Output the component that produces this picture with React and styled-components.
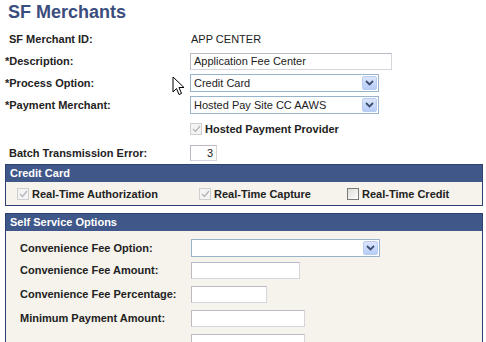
import React from "react";
import styled, { createGlobalStyle } from "styled-components";

const GlobalStyle = createGlobalStyle`
  body {
    margin: 0;
    background: #ffffff;
    font-family: "Liberation Sans", Arial, sans-serif;
  }
`;

const Page = styled.div`
  position: relative;
  width: 486px;
  height: 342px;
  overflow: hidden;
  background: #ffffff;
`;

const Title = styled.h1`
  margin: 0;
  height: 28px;
  padding-left: 8px;
  font-size: 18px;
  line-height: 24px;
  font-weight: bold;
  color: #3b4d7e;
`;

const Form = styled.div`
  display: grid;
  grid-template-columns: 190px 1fr;
  grid-template-rows: 22px 22px 22px 22px 26px 22px;
  align-items: center;
`;

const Label = styled.div`
  padding-left: ${(p) => (p.$required ? "5px" : "9px")};
  font-size: 11px;
  font-weight: bold;
  color: #222;
`;

const Value = styled.div`
  font-size: 11px;
  color: #222;
  padding-left: 1px;
`;

const Field = styled.div`
  display: flex;
  align-items: center;
  align-self: ${(p) => (p.$end ? "end" : "center")};
`;

const TextInput = styled.div`
  box-sizing: border-box;
  width: ${(p) => p.$w}px;
  height: ${(p) => p.$h || 17}px;
  border: 1px solid #bcb8c4;
  border-right-color: #d8d4dc;
  border-bottom-color: #d8d4dc;
  background: #fff;
  font-size: 11px;
  line-height: 15px;
  padding: 0 3px;
  color: #222;
  text-align: ${(p) => (p.$right ? "right" : "left")};
`;

const SelectBox = styled.div`
  box-sizing: border-box;
  width: ${(p) => p.$w}px;
  height: 18px;
  border: 1px solid #98b3cc;
  background: #fff;
  display: flex;
  align-items: center;
  justify-content: space-between;
  padding: 0 1px 0 3px;
  font-size: 11px;
  color: #222;
`;

const Arrow = styled.span`
  box-sizing: border-box;
  width: 15px;
  height: 14px;
  border: 1px solid #b9ccf0;
  border-radius: 2px;
  background: linear-gradient(#dbe6fd, #b8cdf8);
  display: flex;
  align-items: center;
  justify-content: center;
`;

const CheckLine = styled.label`
  display: flex;
  align-items: center;
  gap: 3px;
  font-size: 11px;
  font-weight: bold;
  color: #222;
`;

const Box = styled.span`
  box-sizing: border-box;
  width: 12px;
  height: 12px;
  border: 1px solid ${(p) => (p.$disabled ? "#cfcfcf" : "#7b7b7b")};
  background: ${(p) =>
    p.$disabled ? "#f4f4f4" : "linear-gradient(135deg, #dcdcd6, #ffffff)"};
  display: flex;
  align-items: center;
  justify-content: center;
`;

const Section = styled.div`
  margin: 0 3px 0 5px;
  border: 1px solid #2e4170;
  border-top: none;
  margin-top: ${(p) => p.$top || 0}px;
`;

const SectionHead = styled.div`
  height: 17px;
  background: #3f5789;
  border-top: 1px solid #2e4170;
  color: #fff;
  font-size: 11px;
  font-weight: bold;
  line-height: 17px;
  padding-left: 4px;
`;

const CardRow = styled.div`
  height: 23px;
  background: #f5f3ec;
  display: grid;
  grid-template-columns: 182px 148px 1fr;
  align-items: center;
  padding-left: 11px;
`;

const SelfBody = styled.div`
  background: #f5f3ec;
  display: grid;
  grid-template-columns: 171px 1fr;
  grid-template-rows: 21px 24px 24px 24px 24px;
  align-items: center;
  padding: 6px 0 0 14px;
  height: 120px;
`;

const SubLabel = styled.div`
  font-size: 11px;
  font-weight: bold;
  color: #222;
`;

const Cursor = styled.svg`
  position: absolute;
  left: 172px;
  top: 76px;
`;

const Chevron = () => (
  <svg width="9" height="6" viewBox="0 0 9 6">
    <path d="M1 1 L4.5 4.5 L8 1" fill="none" stroke="#3f4f72" strokeWidth="1.8" />
  </svg>
);

const Tick = ({ color }) => (
  <svg width="9" height="8" viewBox="0 0 9 8">
    <path d="M1 4 L3.5 6.5 L8 1" fill="none" stroke={color} strokeWidth="1.3" />
  </svg>
);

const Select = ({ w, text }) => (
  <SelectBox $w={w}>
    <span>{text}</span>
    <Arrow>
      <Chevron />
    </Arrow>
  </SelectBox>
);

const Check = ({ checked, disabled, text }) => (
  <CheckLine>
    <Box $disabled={disabled}>{checked && <Tick color="#b5b5b5" />}</Box>
    {text}
  </CheckLine>
);

export default function App() {
  return (
    <Page>
      <GlobalStyle />
      <Title>SF Merchants</Title>
      <Form>
        <Label>SF Merchant ID:</Label>
        <Value>APP CENTER</Value>

        <Label $required>*Description:</Label>
        <Field>
          <TextInput $w={202}>Application Fee Center</TextInput>
        </Field>

        <Label $required>*Process Option:</Label>
        <Field>
          <Select w={189} text="Credit Card" />
        </Field>

        <Label $required>*Payment Merchant:</Label>
        <Field>
          <Select w={189} text="Hosted Pay Site CC AAWS" />
        </Field>

        <div />
        <Field>
          <Check checked disabled text="Hosted Payment Provider" />
        </Field>

        <Label>Batch Transmission Error:</Label>
        <Field>
          <TextInput $w={27} $h={16} $right>
            3
          </TextInput>
        </Field>
      </Form>

      <Section>
        <SectionHead>Credit Card</SectionHead>
        <CardRow>
          <Check checked disabled text="Real-Time Authorization" />
          <Check checked disabled text="Real-Time Capture" />
          <Check text="Real-Time Credit" />
        </CardRow>
      </Section>

      <Section $top={7}>
        <SectionHead>Self Service Options</SectionHead>
        <SelfBody>
          <SubLabel>Convenience Fee Option:</SubLabel>
          <Field>
            <Select w={189} text="" />
          </Field>
          <SubLabel>Convenience Fee Amount:</SubLabel>
          <Field>
            <TextInput $w={109} />
          </Field>
          <SubLabel>Convenience Fee Percentage:</SubLabel>
          <Field>
            <TextInput $w={76} />
          </Field>
          <SubLabel>Minimum Payment Amount:</SubLabel>
          <Field>
            <TextInput $w={114} />
          </Field>
          <div />
          <Field>
            <TextInput $w={114} />
          </Field>
        </SelfBody>
      </Section>

      <Cursor width="14" height="21" viewBox="0 0 14 21">
        <path
          d="M1 1 L1 16 L4.5 12.5 L7 18.5 L9.5 17.5 L7 11.5 L12 11.5 Z"
          fill="#fff"
          stroke="#000"
          strokeWidth="1"
          strokeLinejoin="miter"
        />
      </Cursor>
    </Page>
  );
}
